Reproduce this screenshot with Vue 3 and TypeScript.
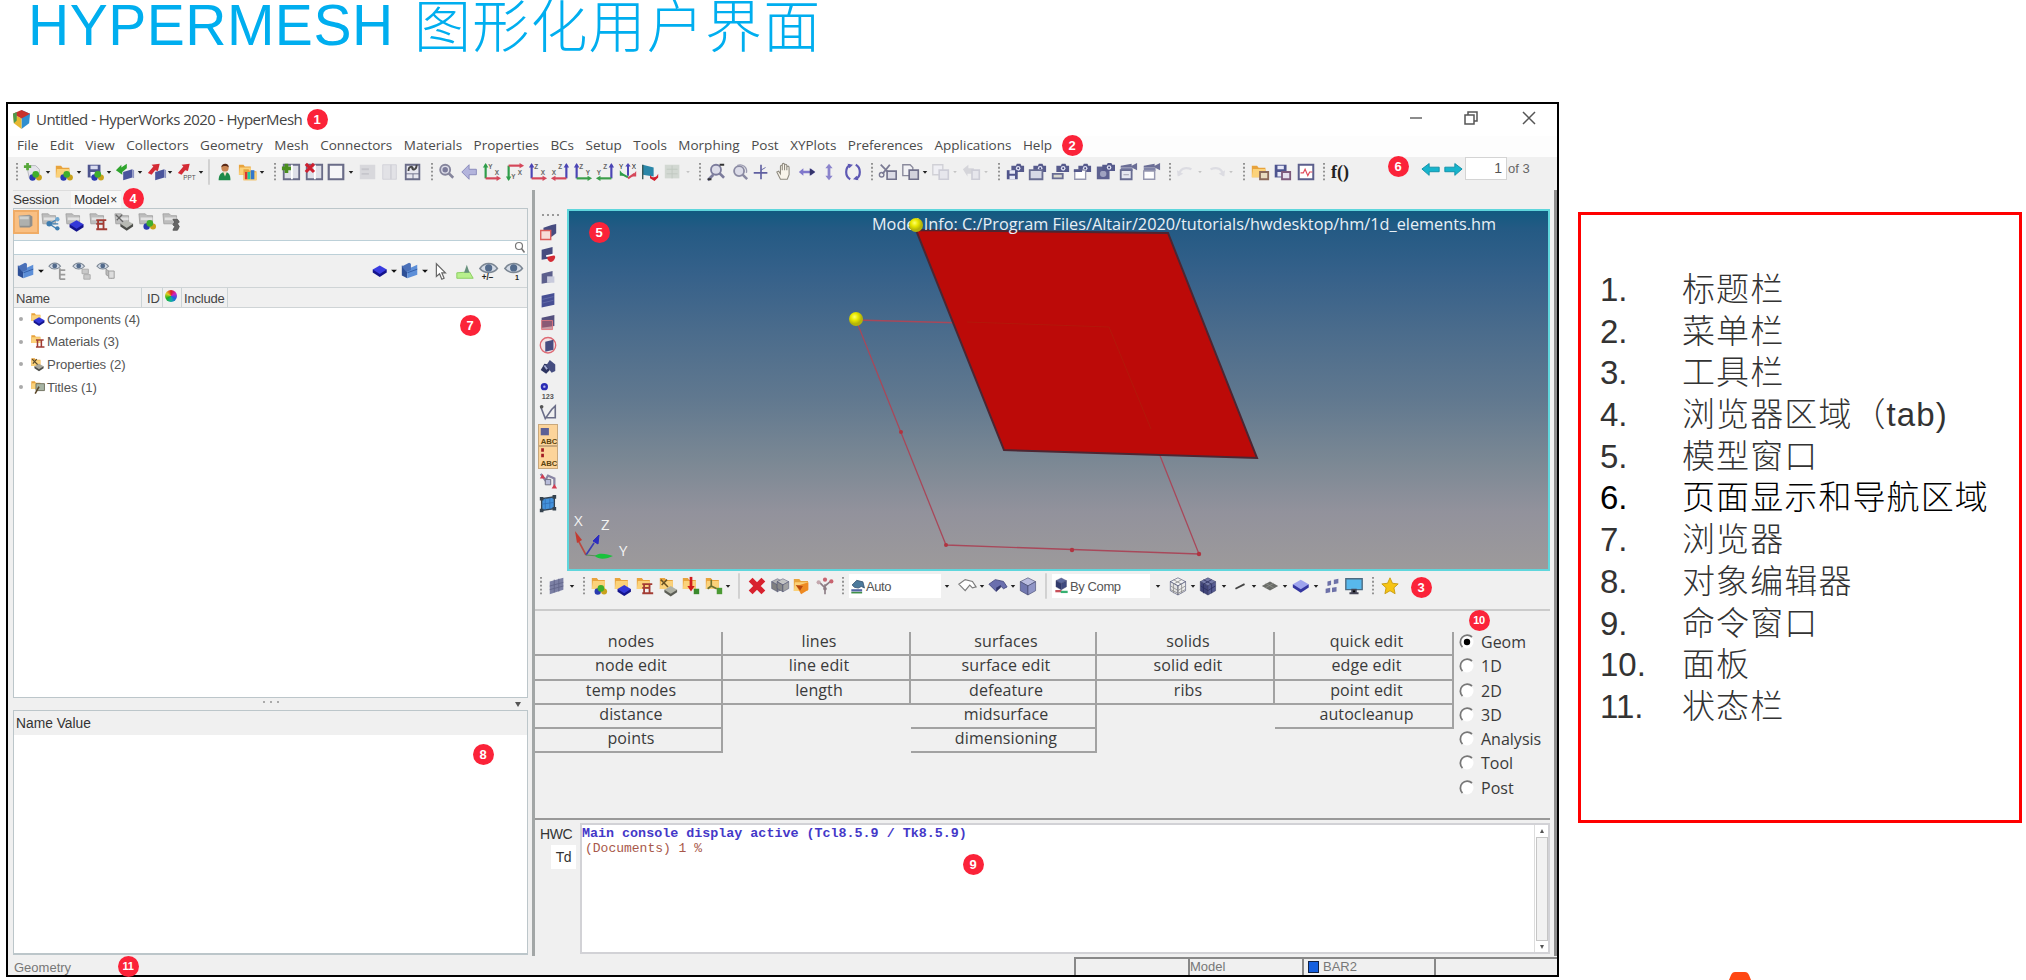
<script setup lang="ts">
type Item = [name: string, x: number]
interface Cell { name: string; w: number; gap: number }

const NARROW = ['dd', 'grip', 'sep', 'DD']

// Turns icon centres into widths and gaps so that the row can flow.
function row(start: number, items: Item[]): Cell[] {
  let end = start
  return items.map(([name, x]) => {
    const w = NARROW.includes(name) ? 8 : 22
    const gap = x - w / 2 - end
    end = x + w / 2
    return { name, w, gap }
  })
}

const folder = (x: number, y: number, s = 1) =>
  `<g transform="translate(${x} ${y}) scale(${s})"><path d="M0 1h5l1.500 2H13v9H0z" fill="#e8a33c"/><path d="M1 4h12v8H0z" fill="#fbd27a"/></g>`
const grayFolder =
  `<path d="M1 2h7l2 2h6v9H2z" fill="#bdbdbd" stroke="#999" stroke-width=".8"/><path d="M3 6h13v3H3z" fill="#e2e2e2"/>`
const slab = (x: number, y: number, top: string, side: string, s = 1) =>
  `<g transform="translate(${x} ${y}) scale(${s})"><path d="M0 4v3l7 4.500 7-4.500V4z" fill="${side}"/><path d="M7 0l7 4-7 4.500L0 4z" fill="${top}"/></g>`
const trio = (x: number, y: number) =>
  `<g transform="translate(${x} ${y})"><circle cx="3.500" cy="7" r="3.500" fill="#2a3bb0"/><circle cx="10.500" cy="7" r="3.300" fill="#c9a21c"/><circle cx="7" cy="3.500" r="3.700" fill="#3fae2c"/></g>`
const cube = (x: number, y: number, s: number, a: string, b: string, c: string) =>
  `<g transform="translate(${x} ${y}) scale(${s})" stroke="#3a3f66" stroke-width=".6"><path d="M9 0l8 4-8 4.500L1 4z" fill="${a}"/><path d="M1 4l8 4.500V18l-8-4.500z" fill="${b}"/><path d="M17 4L9 8.500V18l8-4.500z" fill="${c}"/></g>`
const blueBox = (x: number, y: number, o = 1) =>
  `<g transform="translate(${x} ${y})" opacity="${o}"><path d="M0 3l10-3v9L0 12z" fill="#4a559c"/><path d="M10 0l2 1v9l-2-1z" fill="#8d94c2"/></g>`
const page = (c: string) => `<path d="M3 3h15v16H3z" fill="#e6e6ee" stroke="${c}" stroke-width="2"/>`
const lens = (x: number, y: number, r: number, c: string) =>
  `<circle cx="${x}" cy="${y}" r="${r}" fill="#dcdce8" stroke="${c}" stroke-width="2"/><path d="M${x + r * 0.7} ${y + r * 0.7}l5 5" stroke="${c}" stroke-width="2.800"/>`
const cam = (x: number, y: number) =>
  `<g transform="translate(${x} ${y})"><path d="M-1 2h5l1-2h4l1 2h3v7H-1z" fill="#565a8c"/><circle cx="6.500" cy="5" r="2.500" fill="#e0e2f4"/><circle cx="6.500" cy="5" r="1.100" fill="#41457a"/></g>`
const clap =
  `<path d="M3 4l12-2v4H3zM15 4l6-3v8l-6-3z" fill="#6b6e96"/><path d="M3 6h13v4H3z" fill="#8084a8"/>`
const eye = (x: number, y: number, s = 1) =>
  `<g transform="translate(${x} ${y}) scale(${s})"><path d="M0 6C4 0 12 0 16 6 12 11 4 11 0 6z" fill="#d4dbe6" stroke="#7c8794" stroke-width="1.500"/><circle cx="8" cy="5.500" r="3.300" fill="#536b8c"/></g>`
const axis = (v: string, vx: number, h: string, hy: number, l1: string, l2: string) => {
  const up = hy > 10
  const right = vx < 10
  return (
    `<path d="M${vx} ${up ? 3 : 19}V${hy}" stroke="${v}" stroke-width="2.400"/>` +
    `<path d="M${vx - 3} ${up ? 6 : 16}h6l-3 ${up ? -5 : 5}z" fill="${v}"/>` +
    `<path d="M${vx} ${hy}H${right ? 18 : 4}" stroke="${h}" stroke-width="2.400"/>` +
    `<path d="M${right ? 16 : 6} ${hy - 3}v6l${right ? 5 : -5}-3z" fill="${h}"/>` +
    `<text x="${right ? 7 : 9}" y="${up ? 8 : 19}" font-size="7" font-weight="bold" font-family="Liberation Sans, sans-serif" fill="#666">${l1}</text>` +
    `<text x="${right ? 14 : 2}" y="14" font-size="7" font-weight="bold" font-family="Liberation Sans, sans-serif" fill="#666">${l2}</text>`
  )
}
const abc =
  `<text x="3" y="21" font-size="8.500" font-weight="bold" font-family="Liberation Sans, sans-serif" fill="#5c4410">ABC</text>`
const steel = `<path d="M8 9h11M8 13h9M10 9v10M16 9v10M8 19h12" stroke="#a33c34" stroke-width="2" fill="none"/>`

const icons: Record<string, string> = {
  dd: `<path d="M1.500 10h5l-2.500 3z" fill="#222"/>`,
  DD: `<path d="M.8 9.500h6.400L4 13z" fill="#111"/>`,
  grip: `<path d="M4 1v21" stroke="#8a8a8a" stroke-width="2" stroke-dasharray="2 2.300"/>`,
  sep: `<path d="M4-3v28" stroke="#c4c4c4" stroke-width="1.500"/>`,
  new: `<path d="M4 4h10l4 4v10H7z" fill="#e4e4ea" stroke="#b5b5bd"/><path d="M1 5h8M5 1v8" stroke="#57a83a" stroke-width="3"/>` + trio(7, 10),
  open: folder(2, 3, 1.15) + trio(7, 10),
  save: `<path d="M3 3h14v14H3z" fill="#4d548e"/><path d="M6 4h8v4H6z" fill="#d9dcf0"/><path d="M6 11h8v5H6z" fill="#eef"/>` + trio(7, 10),
  imp: blueBox(9, 8) + `<path d="M13 2L7 6V3L1 9l7 5v-3l5-4z" fill="#2fa52d"/>`,
  exp: blueBox(9, 8) + `<path d="M1 12l4 2 4-5 3 1 2-8-9 1 2 2z" fill="#d42b35"/>`,
  ppt: `<path d="M1 12l4 2 4-5 3 1 2-8-9 1 2 2z" fill="#d42b35"/><text x="7" y="20" font-size="7" font-family="Liberation Sans, sans-serif" fill="#555">PPT</text>`,
  user: `<path d="M4 20c0-6 3-9 7-9s6 3 6 9z" fill="#1f8a4a"/><circle cx="11" cy="6.500" r="4" fill="#c98552"/><path d="M7 6c0-6 9-5 8 0-2-2-6-2-8 0z" fill="#5a2a18"/><path d="M9 11l2 5 2-5z" fill="#f3dfc4"/>`,
  folders: folder(1, 2) + folder(6, 7, 1.1) + `<path d="M9 11v8" stroke="#d33" stroke-width="3"/><path d="M12 11v8" stroke="#2c9" stroke-width="3"/><path d="M16 9v10" stroke="#37c" stroke-width="4"/>`,
  addpage: `<path d="M3 3h17v16H3z" fill="#dfe0e8" stroke="#6a6c88" stroke-width="2"/><path d="M12 3v16" stroke="#fff" stroke-width="2"/><path d="M1 7h10M6 2v10" stroke="#4a8f1f" stroke-width="4"/>`,
  delpage: `<path d="M3 3h17v16H3z" fill="#dfe0e8" stroke="#6a6c88" stroke-width="2"/><path d="M12 3v16" stroke="#fff" stroke-width="2"/><path d="M2 2l9 9M11 2l-9 9" stroke="#cf2030" stroke-width="3.500"/>`,
  layout: `<path d="M3 3h16v16H3z" fill="#f6f6f8" stroke="#6a6c88" stroke-width="2.400"/>`,
  ghost1: `<path d="M2 3h17v16H2z" fill="#d8d8dc"/><path d="M4 8h8M4 13h8" stroke="#c6c6cc" stroke-width="2"/>`,
  ghost2: `<path d="M3 3h15v16H3z" fill="#e2e2e6" stroke="#d2d2d8"/><path d="M12 3v16" stroke="#d2d2d8" stroke-width="2"/>`,
  sync: page('#6a6c88') + `<path d="M11 13v6M3 13h15" stroke="#6a6c88"/><path d="M6 10c0-6 5-6 5-2M15 3c0 6-5 7-5 3" stroke="#444" stroke-width="2" fill="none"/>`,
  mag: lens(9, 8.5, 5.5, '#85859c') + `<circle cx="9" cy="8.500" r="3" fill="#7b7b9a"/>`,
  back: `<path d="M2 11l8-8v5h8v6h-8v5z" fill="#b3b4dc" stroke="#8687b8"/>`,
  xy: axis('#2f9e4a', 4, '#d5475a', 18, 'Y', 'X'),
  xyi: axis('#2f9e4a', 4, '#d5475a', 4, 'Y', 'X'),
  xz: axis('#4b45b5', 4, '#d5475a', 18, 'Z', 'X'),
  zx: axis('#4b45b5', 18, '#d5475a', 18, 'Z', 'X'),
  yz: axis('#4b45b5', 4, '#3a9e4a', 18, 'Z', 'Y'),
  zy: axis('#4b45b5', 18, '#3a9e4a', 18, 'Z', 'Y'),
  iso: `<path d="M11 15V4" stroke="#4b45b5" stroke-width="2.200"/><path d="M8 5h6l-3-4z" fill="#4b45b5"/><path d="M11 17L4 13" stroke="#2f9e4a" stroke-width="2.200"/><path d="M2 9v6h5z" fill="#2f9e4a"/><path d="M11 18l7-5" stroke="#d5475a" stroke-width="2.200"/><path d="M20 10v6h-5z" fill="#d5475a"/><text x="1" y="8" font-size="7" font-family="Liberation Sans, sans-serif">Y</text><text x="15" y="8" font-size="7" font-family="Liberation Sans, sans-serif">X</text>`,
  flag: `<path d="M3 3l12 3v10L3 14z" fill="#2a86a8"/><path d="M3 3v16" stroke="#355" stroke-width="1.500"/><path d="M11 14c2 4 7 4 9-1v4l-4 4-5-3z" fill="#d3202c"/>`,
  ghost3: `<path d="M2 3h16v15H2z" fill="#d2d8d2"/><path d="M4 8h12M4 13h12M10 4v14" stroke="#c0c8c0"/>`,
  fit: lens(11, 8.5, 5.5, '#7c7c9c') + `<path d="M2 20l6-6" stroke="#7c7c9c" stroke-width="3"/><path d="M15 3h5M2 19h4" stroke="#333" stroke-width="2"/>`,
  zoom: lens(10, 10, 5.5, '#8a8aa2') + `<path d="M8 4a7 7 0 0 1 10 8" stroke="#9a9ab0" stroke-width="1.500" fill="none"/>`,
  plus: `<path d="M3 12h15M11 3v16" stroke="#5f5fa0" stroke-width="1.800"/><path d="M11 9l5-3" stroke="#5f5fa0"/>`,
  hand: `<path d="M6 19L2 11l2-1 2 3V5c0-2 2-2 2 0v4-6c0-2 2.500-2 2.500 0v6-5c0-2 2.500-2 2.500 0v5-3c0-2 2.500-2 2.500 0v8l-2 5z" fill="#f8f4ea" stroke="#8f8b80" stroke-width="1.200"/>`,
  lr: `<path d="M2 11l5-4v2.500h8V7l5 4-5 4v-2.500H7V15z" fill="#8078cc"/><path d="M14 7l6 4-6 4z" fill="#34346a"/>`,
  ud: `<path d="M11 2l4 5h-2.500v8H15l-4 5-4-5h2.500V7H7z" fill="#8b84cc"/>`,
  rot: `<path d="M8 3C2 6 2 16 8 19M14 3c6 3 6 13 0 16" stroke="#5e59b4" stroke-width="2.400" fill="none"/><path d="M5 2l6 1-4 4zM17 20l-6-1 4-4z" fill="#5e59b4"/>`,
  cut: `<path d="M3 3l10 10M13 3L5 13" stroke="#7b7b94" stroke-width="2"/><circle cx="4" cy="14" r="2.500" fill="none" stroke="#7b7b94" stroke-width="1.500"/><path d="M10 10h10v9H10z" fill="#dcdce6" stroke="#73738c" stroke-width="1.800"/>`,
  copy: `<path d="M2 3h8l3 3v9H2z" fill="#f2f2f5" stroke="#8a8a9c" stroke-width="1.500"/><path d="M9 9h10v10H9z" fill="#d2d2dc" stroke="#70708a" stroke-width="1.800"/>`,
  gcopy: `<g opacity=".3"><path d="M2 3h11v11H2z" fill="#eef" stroke="#8a8a9c" stroke-width="1.500"/><path d="M9 9h10v10H9z" fill="#d2d2e4" stroke="#8080a0" stroke-width="1.800"/></g>`,
  gpaste: `<g opacity=".3"><path d="M1 8l6-5v4h6v6H6v3z" fill="#99a"/><path d="M11 9h8v10h-8z" fill="#d2d2e4" stroke="#8080a0" stroke-width="1.800"/></g>`,
  gdd: `<path d="M9 10h4l-2 2.500z" fill="#c4c4c4"/>`,
  cam1: cam(8, 2) + `<path d="M2 9h12v10H2z" fill="#50558c"/><path d="M5 9h6v4H5zM5 15h6v4H5z" fill="#e6e8f6"/>`,
  cam2: cam(8, 2) + `<path d="M3 9h14v10H3z" fill="#d6d8e6" stroke="#686c92" stroke-width="2"/>`,
  cam3: cam(8, 2) + `<path d="M3 13h11v5H3z" fill="#d9d9d0" stroke="#686c92" stroke-width="2"/>`,
  cam4: cam(8, 2) + `<path d="M3 9h12v10H3z" fill="#fff" stroke="#9698b0" stroke-width="1.500"/><path d="M2 8h9v3H2z" fill="#565a8c"/>`,
  cam5: `<path d="M2 5h14v14H2z" fill="#5d6190"/><circle cx="9" cy="13" r="3.500" fill="#9fa2c0"/>` + cam(9, 1),
  clap1: clap + `<path d="M3 9h12v10H3z" fill="#e6e8f2" stroke="#686c92" stroke-width="2"/><path d="M6 14h6" stroke="#99a"/>`,
  clap2: clap + `<path d="M3 10h12v9H3z" fill="#fff" stroke="#9698b0" stroke-width="1.600"/>`,
  undo: `<path d="M3 15C4 7 10 5 17 8" stroke="#dcdce2" stroke-width="2.500" fill="none"/><path d="M1 9l1 7 6-3z" fill="#dcdce2"/>`,
  redo: `<path d="M19 15C18 7 12 5 5 8" stroke="#dcdce2" stroke-width="2.500" fill="none"/><path d="M21 9l-1 7-6-3z" fill="#dcdce2"/>`,
  tfold: folder(2, 3, 1.15) + `<path d="M11 11h9v8h-9z" fill="#e9dcc0" stroke="#8a6a5a" stroke-width="2"/>`,
  tsave: `<path d="M3 3h13v14H3z" fill="#4d548e"/><path d="M6 4h7v4H6zM6 11h6v5H6z" fill="#e6e8f8"/><path d="M11 11h9v8h-9z" fill="#e6e0ee" stroke="#7d5a7c" stroke-width="2"/>`,
  plot: `<path d="M3 3h16v16H3z" fill="#fff" stroke="#5c5f8c" stroke-width="2.200"/><path d="M5 12h3l2-4 3 7 2-4h3" stroke="#e0495a" stroke-width="1.300" fill="none"/>`,
  left: `<path d="M1 11l8-6v4h11v5H9v4z" fill="#17b4cc" stroke="#0d8ea6"/>`,
  right: `<path d="M21 11l-8-6v4H2v5h11v4z" fill="#17b4cc" stroke="#0d8ea6"/>`,
  // Browser
  b1: `<path d="M3 4l12-1 3 2v10l-3 2H4z" fill="#8e8e8c"/><path d="M3 4h12v11H4z" fill="#aeb0ae"/><path d="M4 5h10v3H4z" fill="#d0d2d0"/>`,
  b2: grayFolder + `<path d="M18 8L9 13l9 6M9 13h10" stroke="#4583b4" stroke-width="1.500" fill="none"/><circle cx="9" cy="13" r="3" fill="#3d7cb0"/><circle cx="18" cy="8" r="2.400" fill="#6fa8d2"/><circle cx="18" cy="18" r="2.400" fill="#3d7cb0"/>`,
  b3: grayFolder + slab(5, 9, '#3338d8', '#14148c', 1.1),
  b4: grayFolder + steel,
  b5: grayFolder + `<path d="M2 3l8 8M3 9l6-6" stroke="#666" stroke-width="1.500"/>` + slab(7, 9, '#b8bab4', '#4c4e4a', 1),
  b6: grayFolder + trio(6, 9),
  b7: grayFolder + `<path d="M12 8h5l2 3-2 2 2 3-2 4h-5l2-4-2-2 2-3z" fill="#666" stroke="#555"/>`,
  blue: `<path d="M2 5l6 2v12l-6-3z" fill="#2d4f96"/><path d="M8 9l11-5v11L8 19z" fill="#5d8fd8"/><path d="M2 6l8-4 2 1v7l-5 2z" fill="#4a70b8"/><path d="M8 13l11-4" stroke="#2f5aa6"/>`,
  e1: eye(1, 1, 0.8) + `<path d="M13 8v12M13 10h6M13 15h6M13 20h6" stroke="#9a9a9a" stroke-width="2" fill="none"/>`,
  e2: eye(1, 1, 0.8) + `<path d="M11 9h7v5h-7zM13 15h7v5h-7z" fill="#c9c9c9" stroke="#aaa"/>`,
  e3: eye(1, 1, 0.8) + `<path d="M11 9l6 4v6l-6-4z" fill="#bbb" stroke="#999"/><path d="M14 11h6v8h-6z" fill="#ddd" stroke="#999"/>`,
  slab: slab(3, 5, '#3a3ce0', '#14148c', 1.1),
  cursor: `<path d="M7 3v14l3.500-3 2.500 6 2.500-1-2.500-6H17z" fill="#fff" stroke="#666" stroke-width="1.300"/>`,
  green: `<path d="M2 13l14-1 4 7H2z" fill="#b8f08c" stroke="#86cc5c"/><path d="M13 4l3 9h-6z" fill="#67917c"/>`,
  eyepm: eye(1, 1, 1.2) + `<text x="3" y="21" font-size="9" font-weight="bold" font-family="Liberation Sans, sans-serif" fill="#222">+/−</text>`,
  eye1: eye(1, 1, 1.2) + `<text x="12" y="21" font-size="8" font-weight="bold" font-family="Liberation Sans, sans-serif" fill="#222">1</text>`,
  tcomp: folder(3, 2, 0.9) + slab(6, 8, '#3338d8', '#14148c', 1),
  tmat: folder(3, 2, 0.9) + `<path d="M9 9h10M11 9v10M16 9v10M9 18h11" stroke="#a03c34" stroke-width="2"/>`,
  tprop: folder(3, 2, 0.9) + `<path d="M4 4l8 8M5 10l5-6" stroke="#5a4a2a" stroke-width="1.500"/>` + slab(7, 10, '#a9a79a', '#4c4e4a', 0.85),
  ttitle: folder(3, 2, 0.9) + `<path d="M9 6h11v9H9z" fill="#a7b4a4" stroke="#5e5e4a"/><path d="M8 19l5-9" stroke="#5a4628" stroke-width="2"/>`,
  // View tools
  v1: `<path d="M6 6l9-3 5-1v10l-5 4H6z" fill="#474c80"/><path d="M3 9h11v10H3z" fill="#f6dcd8" stroke="#dc5a58" stroke-width="1.500"/>`,
  v2: `<path d="M4 5l12-3v12L4 16z" fill="#474c80"/><path d="M10 14c2-4 8-5 9-1-1 6-7 8-9 1z" fill="#d42a34"/><path d="M9 12l9-2" stroke="#fff" stroke-width="2"/>`,
  v3: `<path d="M4 7l12-3v12L4 18z" fill="#5c5f8c"/><path d="M10 10h8v7h-8z" fill="#c8cadc"/>`,
  v4: `<path d="M4 6l14-3v13L4 19z" fill="#474f94"/><path d="M5 10l12-3M5 14l12-3" stroke="#6a72ae" stroke-width=".8"/>`,
  v5: `<path d="M4 6l14-3v12L4 17z" fill="#54507e"/><path d="M4 9h12v10H4z" fill="#b06070" fill-opacity=".6" stroke="#e07880"/>`,
  v6: `<circle cx="11" cy="11" r="8.500" fill="#f4e4e6" stroke="#de6a74" stroke-width="1.500"/><path d="M8 7l9-2v11l-9 2z" fill="#474c80"/>`,
  v7: `<path d="M3 14l4-7 5 1 1 6-4 4z" fill="#2e3560"/><path d="M9 9l4-6 6 5v7l-4 2z" fill="#454d80"/><path d="M7 9l3 4" stroke="#a8b0d8" stroke-width="2"/>`,
  v8: `<circle cx="7" cy="7" r="4" fill="#2a2cb4"/><circle cx="7" cy="7" r="1.300" fill="#b8baf0"/><text x="4" y="21" font-size="8" font-weight="bold" font-family="Liberation Sans, sans-serif" fill="#555">123</text>`,
  v9: `<path d="M3 5l5 13 7-10 4-4v13H8" stroke="#6b6e88" stroke-width="1.800" fill="none"/><circle cx="4" cy="5" r="2" fill="#555"/>`,
  v10: `<path d="M3 3h9v8H3z" fill="#5b5f96"/>` + abc,
  v11: `<path d="M5 1v4M5 7v4" stroke="#a31c24" stroke-width="3"/>` + abc,
  v12: `<path d="M3 4l5 7 3-5 7 3v8" stroke="#8a86a4" stroke-width="2.500" fill="none"/><path d="M2 9l3-5 3 5zM15 20l3-5 3 5z" fill="#d23c50"/><path d="M8 10h6v6H8z" fill="#b8bcda" stroke="#667"/>`,
  v13: `<path d="M4 6l14-2v13L4 19z" fill="#4492dc" stroke="#35424e" stroke-width="1.500"/><path d="M8 5v13M13 5v13M4 12l14-2" stroke="#2f6cb2" stroke-width=".8"/><path d="M2 4h4v4H2zM16 2h4v4h-4zM2 17h4v4H2zM16 15h4v4h-4z" fill="#35424e"/>`,
  // Lower toolbar
  m0: `<path d="M3 6l15-4v13L3 20z" fill="#7c80a4"/><path d="M3 11l15-4M3 15l15-4M8 4v14M13 3v14" stroke="#62668a" stroke-width="1"/>`,
  m1: folder(2, 1, 1.1) + trio(5, 10),
  m2: folder(2, 1, 1.1) + slab(5, 10, '#3338d8', '#14148c', 1.05),
  m3: folder(2, 1, 1.1) + steel,
  m4: folder(2, 1, 1.1) + `<path d="M3 4l8 8M4 10l6-6" stroke="#6a5222" stroke-width="1.600"/>` + slab(7, 11, '#b0b2a6', '#5c5e56', 1),
  m5: folder(2, 1, 1.1) + `<path d="M11 1v13" stroke="#d01c1c" stroke-width="3"/><path d="M7 11h8l-4 6z" fill="#d01c1c"/><path d="M14 14h6v6h-6z" fill="#3b8a2c"/>`,
  m6: folder(2, 1, 1.1) + `<path d="M8 4v7l-4 3M8 11l6 3" stroke="#6d7030" stroke-width="1.800" fill="none"/><path d="M14 13h6v7h-6z" fill="#4b9a34"/>`,
  del: `<path d="M4 4l14 14M18 4L4 18" stroke="#d8222e" stroke-width="6"/>`,
  org: cube(1, 3, 0.8, '#b4b4b4', '#808080', '#969696') + cube(7, 3, 0.8, '#c4c4c4', '#8a8a8a', '#a2a2a2'),
  card: folder(2, 2, 1.2) + `<path d="M5 11l13-4v8l-8 5z" fill="#ee8a22"/><path d="M4 10l8 1-3 5z" fill="#b8460e"/>`,
  tree: `<path d="M11 20V9M11 13L5 7M11 11l6-5" stroke="#8c7c84" stroke-width="1.800"/><circle cx="11" cy="4" r="2.300" fill="#c86470"/><circle cx="4" cy="7" r="2.300" fill="#c4a8ae"/><circle cx="18" cy="6" r="2.300" fill="#c86470"/><circle cx="11" cy="14" r="2" fill="#8c7c84"/>`,
  auto: `<path d="M4 9l6-6 8 2 2 8-4-2-4 2-5-1z" fill="#4d7a9c" stroke="#35506c"/><path d="M3 16h14" stroke="#5568a4" stroke-width="3"/><path d="M3 19h14" stroke="#3f9048" stroke-width="2"/>`,
  wire: `<path d="M2 9l7-5 8 2 4 6-4 1-3-3-5 6z" fill="#fff" stroke="#7c7c7c" stroke-width="1.300"/>`,
  shade: `<path d="M1 9l7-5 9 2 4 6-4 2-3-3-5 6z" fill="#6a6fae" stroke="#454a80"/><path d="M9 17v-4l5-3v3z" fill="#31356a"/>`,
  cubeA: cube(1.5, 2, 1.05, '#babde0', '#7278b0', '#9095c6'),
  bycomp: cube(3, 0, 0.85, '#5e6aa0', '#303a6c', '#404a80') + `<path d="M3 17h8" stroke="#c8505a" stroke-width="3"/><path d="M10 18h9" stroke="#35b070" stroke-width="3"/>`,
  mesh: cube(1.5, 2, 1.05, '#f2f2f2', '#e2e2e2', '#ececec') + `<path d="M6 4l9 5v10M15 4L6 9v10M3 11l8 5 8-5M3 15l8 4 8-4M11 11v9" stroke="#8d8d8d" stroke-width=".9" fill="none"/>`,
  meshb: cube(1.5, 2, 1.05, '#7479a8', '#41457a', '#555a90') + `<path d="M6 4l9 5v10M15 4L6 9v10M3 11l8 5 8-5" stroke="#2c3060" stroke-width=".9" fill="none"/>`,
  line: `<path d="M6 14l10-5" stroke="#444" stroke-width="2"/>`,
  flat: `<path d="M11 6l9 5-9 5-9-5z" fill="#6a6c68"/><path d="M6 8l9 5M15 8l-9 5" stroke="#94968e" stroke-width=".8"/>`,
  slabl: slab(2, 4, '#9ea4ee', '#3436a0', 1.25),
  quads: `<path d="M6 6l4-1v5l-4 1zM13 4l5-1v5l-5 1zM4 14l5-1v5l-5 1zM11 13l5-1v5l-5 1z" fill="#6d71a8"/>`,
  screen: `<path d="M2 3h18v12H2z" fill="#58b8ec" stroke="#4c6a80" stroke-width="1.500"/><path d="M9 15h4v4H9zM6 19h10" stroke="#445" stroke-width="2"/>`,
  star: `<path d="M11 2l2.700 6 6.300.7-4.700 4.300 1.300 6.500-5.600-3.300-5.600 3.300 1.300-6.500L2 8.700 8.300 8z" fill="#f6c414" stroke="#c89a10"/>`
}

const menus = ['File', 'Edit', 'View', 'Collectors', 'Geometry', 'Mesh', 'Connectors', 'Materials', 'Properties', 'BCs', 'Setup', 'Tools', 'Morphing', 'Post', 'XYPlots', 'Preferences', 'Applications', 'Help']

const mainTools = row(8, [
  ['grip', 17], ['new', 33], ['dd', 48], ['open', 64], ['dd', 79], ['save', 95], ['dd', 109], ['imp', 125], ['dd', 140], ['exp', 157], ['dd', 170], ['ppt', 187], ['dd', 201], ['sep', 209],
  ['user', 225], ['folders', 248], ['dd', 262], ['grip', 275], ['addpage', 291], ['delpage', 314], ['layout', 336], ['dd', 351], ['ghost1', 368], ['ghost2', 390], ['sync', 413], ['grip', 432],
  ['mag', 447], ['back', 470], ['xy', 492], ['xyi', 515], ['xz', 538], ['zx', 560], ['yz', 583], ['zy', 605], ['iso', 628], ['flag', 650], ['ghost3', 673], ['gdd', 688], ['grip', 700],
  ['fit', 716], ['zoom', 740], ['plus', 761], ['hand', 785], ['lr', 807], ['ud', 829], ['rot', 853], ['grip', 872], ['cut', 888], ['copy', 911], ['dd', 925], ['gcopy', 941], ['gdd', 955], ['gpaste', 972], ['gdd', 986], ['grip', 999],
  ['cam1', 1015], ['cam2', 1037], ['cam3', 1060], ['cam4', 1082], ['cam5', 1105], ['clap1', 1128], ['clap2', 1151], ['grip', 1170], ['undo', 1186], ['gdd', 1200], ['redo', 1216], ['gdd', 1231], ['grip', 1244], ['tfold', 1260], ['tsave', 1282], ['plot', 1306], ['grip', 1324]
])
const navTools = row(1365, [['left', 1431], ['right', 1453]])
const browserTools = row(14, [['b1', 26], ['b2', 51], ['b3', 75], ['b4', 99], ['b5', 124], ['b6', 148], ['b7', 172]])
const filterTools = row(14, [['blue', 26], ['DD', 41], ['e1', 58], ['e2', 82], ['e3', 106], ['slab', 380], ['DD', 394], ['blue', 410], ['DD', 425], ['cursor', 440], ['green', 465], ['eyepm', 489], ['eye1', 514]])
const viewTools = Array.from({ length: 13 }, (_, i) => `v${i + 1}`)
const low1 = row(535, [['grip', 541], ['m0', 557], ['dd', 572], ['grip', 584], ['m1', 600], ['m2', 623], ['m3', 645], ['m4', 668], ['m5', 691], ['m6', 714], ['dd', 728], ['sep', 739], ['del', 757], ['org', 780], ['card', 802], ['tree', 825], ['grip', 843]])
const low2 = row(941, [['dd', 947], ['wire', 967], ['dd', 982], ['shade', 998], ['dd', 1013], ['cubeA', 1028], ['sep', 1046]])
const low3 = row(1150, [['dd', 1158], ['mesh', 1178], ['dd', 1193], ['meshb', 1208], ['dd', 1224], ['line', 1240], ['dd', 1254], ['flat', 1270], ['dd', 1285], ['slabl', 1301], ['dd', 1316], ['quads', 1332], ['screen', 1354], ['grip', 1373], ['star', 1390]])

const tree = [
  { icon: 'tcomp', label: 'Components (4)' },
  { icon: 'tmat', label: 'Materials (3)' },
  { icon: 'tprop', label: 'Properties (2)' },
  { icon: 'ttitle', label: 'Titles (1)' }
]
const panel = [
  ['nodes', 'node edit', 'temp nodes', 'distance', 'points'],
  ['lines', 'line edit', 'length'],
  ['surfaces', 'surface edit', 'defeature', 'midsurface', 'dimensioning'],
  ['solids', 'solid edit', 'ribs'],
  ['quick edit', 'edge edit', 'point edit', 'autocleanup']
]
const pages = ['Geom', '1D', '2D', '3D', 'Analysis', 'Tool', 'Post']
const badges: [number, number, number][] = [
  [1, 317, 119], [2, 1072, 145], [3, 1421, 587], [4, 133, 198], [5, 599, 232], [6, 1398, 166],
  [7, 470, 325], [8, 483, 754], [9, 973, 864], [10, 1479, 620], [11, 128, 966]
]
const legend = ['标题栏', '菜单栏', '工具栏', '浏览器区域（tab)', '模型窗口', '页面显示和导航区域', '浏览器', '对象编辑器', '命令窗口', '面板', '状态栏']
</script>

<template>
  <div class="slide">
    <h1><span class="latin">HYPERMESH</span><span class="han">图形化用户界面</span></h1>
    <div class="content">
      <section class="window">
        <header class="titlebar">
          <svg class="logo" viewBox="0 0 20 20">
            <path d="M10 0l9 4-1 10-8 6z" fill="#2f8fd0" /><path d="M1 4l9 5v11L2 14z" fill="#e8b832" />
            <path d="M10 0l9 4-9 5-9-5z" fill="#c8332c" /><path d="M1 4l4-2v9L2 14z" fill="#4d9a4c" />
          </svg>
          <span class="caption">Untitled - HyperWorks 2020 - HyperMesh</span>
          <svg class="controls" viewBox="0 0 140 20">
            <path d="M7 9h12" stroke="#666" stroke-width="1.500" />
            <path d="M62 6h9v9h-9zM65 6V3h9v9h-3" fill="none" stroke="#555" stroke-width="1.500" />
            <path d="M120 3l12 12M132 3l-12 12" stroke="#555" stroke-width="1.500" />
          </svg>
        </header>
        <nav class="menubar"><span v-for="m in menus" :key="m">{{ m }}</span></nav>
        <div class="toolbar">
          <svg v-for="(c, i) in mainTools" :key="i" :viewBox="`0 0 ${c.w} 22`" :style="{ width: c.w + 'px', marginLeft: c.gap + 'px' }" v-html="icons[c.name]" />
          <b class="fn">f()</b>
          <svg v-for="(c, i) in navTools" :key="'n' + i" class="nav" :viewBox="`0 0 ${c.w} 22`" :style="{ width: c.w + 'px', marginLeft: c.gap + 'px' }" v-html="icons[c.name]" />
          <span class="pageno">1</span><span class="of">of 3</span>
        </div>

        <div class="body">
          <aside class="browser">
            <div class="tabs"><span class="tab">Session</span><span class="tab on">Model<i>×</i></span></div>
            <div class="box top">
              <div class="icons first">
                <svg v-for="(c, i) in browserTools" :key="i" :class="{ active: i === 0 }" :viewBox="`0 0 ${c.w} 22`" :style="{ width: c.w + 'px', marginLeft: c.gap + 'px' }" v-html="icons[c.name]" />
              </div>
              <div class="search">
                <svg viewBox="0 0 12 12"><circle cx="5" cy="5" r="3.500" fill="none" stroke="#777" stroke-width="1.200" /><path d="M7.500 7.500l3 4" stroke="#777" stroke-width="1.500" /></svg>
              </div>
              <div class="icons second">
                <svg v-for="(c, i) in filterTools" :key="i" :viewBox="`0 0 ${c.w} 22`" :style="{ width: c.w + 'px', marginLeft: c.gap + 'px' }" v-html="icons[c.name]" />
              </div>
              <div class="thead">
                <span class="c1">Name</span><span class="c2">ID</span><span class="c3"><i class="wheel"></i></span><span class="c4">Include</span>
              </div>
              <ul class="tree">
                <li v-for="t in tree" :key="t.label"><i class="knob"></i><svg viewBox="0 0 22 22" v-html="icons[t.icon]" />{{ t.label }}</li>
              </ul>
            </div>
            <div class="split"><i class="dots"></i><i class="tri"></i></div>
            <div class="box bottom"><div class="nv">Name Value</div></div>
          </aside>
          <div class="divider"></div>

          <main class="work">
            <div class="viewrow">
              <div class="vtools">
                <i class="vgrip"></i>
                <svg v-for="(n, i) in viewTools" :key="n" :class="{ hot: i === 9 || i === 10 }" viewBox="0 0 22 22" v-html="icons[n]" />
              </div>
              <div class="viewport">
                <svg class="scene" viewBox="570 212 979 358">
                  <defs><radialGradient id="ball" cx=".4" cy=".35"><stop offset="0" stop-color="#ffff6a" /><stop offset=".5" stop-color="#e8e800" /><stop offset="1" stop-color="#b4b40a" /></radialGradient></defs>
                  <path d="M857 321L1110 328 1200 555 947 546z" fill="none" stroke="#a8485a" stroke-width="1.300" />
                  <path d="M917 231L1169 234 1258 459 1005 451z" fill="#bc0a08" stroke="#4c2632" stroke-width="2" />
                  <path d="M968 323L1110 328 1152 430" fill="none" stroke="#b3180a" stroke-width="1" />
                  <g fill="#b03440"><circle cx="902" cy="433" r="2" /><circle cx="947" cy="546" r="2" /><circle cx="1073" cy="551" r="2.200" /><circle cx="1200" cy="555" r="2.200" /></g>
                  <circle cx="857" cy="320" r="7" fill="url(#ball)" />
                  <path d="M587 556l-8-15" stroke="#b84a42" stroke-width="1.600" /><path d="M576 532l7 9-5 3z" fill="#c43a30" />
                  <path d="M587 556l8-12" stroke="#3c3cb0" stroke-width="1.600" /><path d="M600 536l-1 9-5-3z" fill="#2c2cc0" stroke="#2c2cc0" />
                  <path d="M587 556l12 1" stroke="#5a8a5a" stroke-width="1.200" /><path d="M596 557c4-4 12-2 18 0-6 3-14 4-18 0z" fill="#19c23c" />
                  <g font-family="Open Sans, sans-serif" font-size="15" fill="#f2f2f2"><text x="575" y="527">X</text><text x="602" y="531">Z</text><text x="620" y="557">Y</text></g>
                  <text class="info" x="873" y="230.500" textLength="624" lengthAdjust="spacingAndGlyphs">Model Info: C:/Program Files/Altair/2020/tutorials/hwdesktop/hm/1d_elements.hm</text>
                  <circle cx="917" cy="226" r="7" fill="url(#ball)" />
                </svg>
              </div>
            </div>

            <div class="lower">
              <svg v-for="(c, i) in low1" :key="'a' + i" :viewBox="`0 0 ${c.w} 22`" :style="{ width: c.w + 'px', marginLeft: c.gap + 'px' }" v-html="icons[c.name]" />
              <div class="combo auto"><svg viewBox="0 0 22 22" v-html="icons.auto" />Auto</div>
              <svg v-for="(c, i) in low2" :key="'b' + i" :viewBox="`0 0 ${c.w} 22`" :style="{ width: c.w + 'px', marginLeft: c.gap + 'px' }" v-html="icons[c.name]" />
              <div class="combo comp"><svg viewBox="0 0 22 22" v-html="icons.bycomp" />By Comp</div>
              <svg v-for="(c, i) in low3" :key="'c' + i" :viewBox="`0 0 ${c.w} 22`" :style="{ width: c.w + 'px', marginLeft: c.gap + 'px' }" v-html="icons[c.name]" />
            </div>

            <div class="panel">
              <div v-for="(col, i) in panel" :key="i" class="col"><div v-for="p in col" :key="p" class="cell">{{ p }}</div></div>
              <div class="radios">
                <label v-for="(p, i) in pages" :key="p">
                  <svg viewBox="0 0 16 16"><circle cx="8" cy="8" r="6.500" fill="#fff" /><path d="M3.500 13A6.800 6.800 0 0 1 13 3" fill="none" stroke="#777" stroke-width="1.800" /><circle v-if="i === 0" cx="8" cy="8" r="3.200" fill="#000" /></svg>{{ p }}
                </label>
              </div>
            </div>

            <div class="console">
              <div class="ctabs"><span>HWC</span><span class="tcl">Td</span></div>
              <div class="term">
                <pre><b>Main console display active (Tcl8.5.9 / Tk8.5.9)</b>
<em>(Documents) 1 %</em></pre>
                <div class="scroll"><i class="up"></i><i class="thumb"></i><i class="down"></i></div>
              </div>
            </div>
          </main>
          <div class="edge"></div>
        </div>

        <footer class="status">
          <span class="mode">Geometry</span>
          <span class="slot s1"></span><span class="slot s2">Model</span><span class="slot s3"><i></i>BAR2</span><span class="slot s4"></span>
        </footer>
      </section>

      <ol class="legend">
        <li v-for="(t, i) in legend" :key="i" :class="{ dark: i === 5 }"><span class="num">{{ i + 1 }}.</span><span>{{ t }}</span></li>
      </ol>
    </div>

    <span v-for="[n, x, y] in badges" :key="n" class="badge" :class="{ two: n > 9 }" :style="{ left: x - 10.5 + 'px', top: y - 10.5 + 'px' }">{{ n }}</span>
    <svg class="brand" viewBox="0 0 26 8"><path d="M4 3c1-2 2-3 4-3h10c2 0 3 1 4 3l2 5H2z" fill="#ff4713" /></svg>
  </div>
</template>

<style>
body { margin: 0; background: #fff; overflow: hidden; }
</style>

<style scoped>
.slide { position: relative; width: 2026px; height: 980px; overflow: hidden; background: #fff; font-family: "Liberation Sans", "Noto Sans CJK SC", sans-serif; }
.slide * { box-sizing: border-box; }
h1 { margin: 0; height: 102px; padding-left: 27px; display: flex; color: #00aeef; font-weight: 300; font-size: 57px; line-height: 51px; white-space: nowrap; }
.latin { width: 387px; padding-left: 1px; letter-spacing: .5px; }
.han { font-family: "Noto Sans CJK SC", sans-serif; font-weight: 300; line-height: 44px; letter-spacing: 1.200px; }
.content { display: flex; align-items: flex-start; }
.window { margin-left: 6px; width: 1553px; height: 875px; border: 2px solid #000; background: #f0f0f0; overflow: hidden; display: flex; flex-direction: column; flex: none; }
.titlebar { height: 32px; flex: none; background: #fff; display: flex; align-items: center; padding: 0 0 2px 4px; }
.logo { width: 19px; height: 19px; }
.caption { margin-left: 5px; font: 15px "Open Sans", sans-serif; letter-spacing: -.53px; color: #444; white-space: nowrap; }
.controls { width: 140px; height: 20px; margin-left: auto; margin-right: 14px; }
.menubar { height: 21px; flex: none; background: #fdfdfd; display: flex; gap: 11.470px; padding-left: 9px; font: 13.500px/19px "Open Sans", sans-serif; color: #4a4a4a; white-space: nowrap; }
.toolbar { height: 33px; flex: none; display: flex; align-items: center; padding-bottom: 3px; }
.toolbar svg, .icons svg, .lower svg { height: 20px; flex: none; overflow: visible; }
.fn { margin-left: 3px; width: 34px; font: bold 18px "Liberation Serif", serif; color: #222; }
.toolbar .nav { margin-top: -6px; }
.pageno { margin: -7px 0 0 1px; width: 42px; height: 23px; border: 1px solid #d4d4d4; background: #fff; text-align: right; padding-right: 4px; font: 14px/21px "Liberation Sans", sans-serif; color: #555; }
.of { margin: -7px 0 0 1px; font-size: 13px; color: #666; }
.body { flex: 1; min-height: 0; display: flex; }
.browser { width: 519px; margin-left: 5px; display: flex; flex-direction: column; flex: none; }
.tabs { height: 18px; display: flex; font-size: 13.500px; line-height: 18px; color: #333; }
.tab { padding-left: 0; width: 58px; border-top: 1px solid #ddd; letter-spacing: -.3px; }
.tab.on { background: #f8f8f8; width: 50px; padding-left: 3px; }
.tab i { font-style: normal; margin-left: 1px; font-size: 12px; }
.box { width: 515px; border: 1px solid #bcc6ca; display: flex; flex-direction: column; }
.box.top { height: 490px; }
.icons { display: flex; align-items: center; }
.first { height: 31px; padding-bottom: 5px; }
.active { background: #f9bf82; outline: 2px solid #f0ac66; }
.search { height: 15px; background: #fff; border: 1px solid #bcd0d8; border-width: 1px 0; display: flex; justify-content: flex-end; }
.search svg { width: 12px; height: 12px; margin-right: 1px; }
.second { height: 32px; }
.thead { height: 21px; display: flex; border: 1px solid #cfd4d6; border-width: 1px 0; font-size: 13px; line-height: 21px; color: #444; }
.thead span { border-right: 1px solid #ccd4d6; padding-left: 2px; letter-spacing: -.2px; }
.c1 { width: 128px; } .thead .c2 { padding-left: 5px; width: 21px; } .c3 { width: 19px; } .c4 { width: 46px; }
.wheel { display: block; width: 12px; height: 12px; margin-top: 2px; border-radius: 50%; background: conic-gradient(#e02020, #d020c0, #2060e0, #10b0a0, #20b020, #e0d020, #e02020); }
.tree { list-style: none; margin: 0; padding: 0 0 0 5px; flex: 1; background: #fff; font-size: 13.200px; color: #555; }
.tree li { height: 22.600px; display: flex; align-items: center; letter-spacing: -.1px; }
.tree svg { width: 17px; height: 17px; margin: 0 1px 0 6px; }
.knob { width: 4px; height: 4px; background: #aaa; border-radius: 50%; }
.split { height: 12px; display: flex; align-items: center; padding-left: 250px; }
.dots { width: 18px; height: 2px; margin-top: -5px; background: repeating-linear-gradient(90deg, #aaa 0 2px, transparent 2px 7px); }
.tri { margin-left: 234px; border: 3px solid transparent; border-top: 5px solid #555; border-bottom: 0; }
.box.bottom { height: 245px; background: #fff; border-bottom-width: 2px; }
.nv { height: 24px; background: #f0f0f0; font-size: 13.800px; line-height: 26px; padding-left: 2px; color: #333; }
.divider { width: 3px; height: 766px; background: #a2a6a6; }
.work { width: 1019px; flex: none; display: flex; flex-direction: column; }
.edge { width: 3px; background: #8e8e8e; }
.viewrow { height: 381px; display: flex; flex: none; }
.vtools { width: 33px; padding-top: 24px; display: flex; flex-direction: column; }
.vtools svg { width: 20px; height: 22.550px; margin-left: 3px; flex: none; }
.vgrip { width: 18px; height: 2px; margin: 0 0 5px 7px; background: repeating-linear-gradient(90deg, #999 0 2px, transparent 2px 5px); }
.hot { background: #fcd49a; outline: 1px solid #c9a87c; outline-offset: -1px; }
.viewport { margin-top: 19px; margin-left: -1px; width: 983px; height: 362px; border: 2px solid #5fd6dc; background: linear-gradient(#125a80 0, #245a84 5%, #36618a 18%, #4b6c8c 34%, #60788f 52%, #7b8894 70%, #92929c 84%, #9d9a9b 100%); }
.scene { display: block; width: 979px; height: 358px; }
.info { font: 16px "Open Sans", sans-serif; fill: #e8f0f6; }
.lower { height: 40px; flex: none; padding-bottom: 8px; border-bottom: 2px solid #cbcbcb; margin-right: 4px; display: flex; align-items: center; }
.combo { height: 24px; background: #fff; display: flex; align-items: center; font-size: 13px; color: #555; letter-spacing: -.4px; }
.combo svg { width: 17px; height: 19px; }
.auto { width: 92px; margin-left: 2px; }
.comp { width: 98px; margin-left: 2px; padding-left: 1px; }
.panel { height: 209px; flex: none; padding-top: 21px; display: grid; grid-template-columns: 188px 188px 186px 178px 179px 1fr; align-items: start; font: 16px "Open Sans", sans-serif; color: #3a3a3a; border-bottom: 2px solid #999; margin-right: 4px; }
.cell { height: 24.250px; border-right: 2px solid #a2a2a2; border-bottom: 2px solid #a2a2a2; text-align: center; line-height: 19px; padding-left: 6px; letter-spacing: .1px; }
.radios { padding-left: 5px; margin-top: -2px; }
.radios label { height: 24.250px; display: flex; align-items: center; white-space: nowrap; }
.radios svg { width: 16px; height: 16px; margin-right: 6px; flex: none; }
.console { flex: 1; display: flex; min-height: 0; padding-top: 3px; }
.ctabs { width: 45px; font-size: 14px; color: #333; display: flex; flex-direction: column; align-items: flex-end; padding-right: 4px; }
.ctabs span { height: 22px; line-height: 22px; padding-right: 4px; letter-spacing: -.5px; }
.ctabs .tcl { background: #fff; width: 25px; height: 24px; line-height: 24px; text-align: right; padding-right: 5px; }
.term { width: 970px; height: 131px; background: #fff; border: 2px solid #d2d2d6; display: flex; justify-content: space-between; }
pre { margin: 1px 0 0; font: 13.370px/15px "Liberation Mono", monospace; white-space: pre; }
pre b { color: #4438c8; }
pre em { font-style: normal; color: #a8584a; font-size: 13px; margin-left: 3px; }
.scroll { width: 14px; border-left: 1px solid #ddd; display: flex; flex-direction: column; align-items: center; }
.up { margin-top: 4px; border: 2.500px solid transparent; border-bottom: 4px solid #555; border-top: 0; }
.thumb { width: 12px; height: 104px; margin-top: 4px; background: #f2f2f2; border: 1px solid #c6c6c6; }
.down { margin-top: 4px; border: 2.500px solid transparent; border-top: 4px solid #555; border-bottom: 0; }
.status { height: 19px; flex: none; display: flex; font-size: 13px; line-height: 22px; color: #777; }
.mode { width: 1066px; padding-left: 6px; line-height: 23px; }
.slot { margin-top: 1px; border-left: 2px solid #888; border-top: 2px solid #888; line-height: 18px; display: flex; align-items: center; }
.s1 { width: 114px; } .s2 { width: 114px; } .s3 { width: 132px; padding-left: 4px; } .s4 { flex: 1; }
.s3 i { width: 11px; height: 12px; background: #1560e0; border: 1px solid #124; margin-right: 4px; }
.legend { list-style: none; margin: 110px 0 0 19px; padding: 54px 0 0 19px; width: 444px; height: 611px; border: 3px solid #f00; font-size: 33px; color: #333; flex: none; }
.legend li { height: 41.700px; line-height: 42px; display: flex; white-space: nowrap; letter-spacing: 1.100px; font-weight: 300; }
.num { width: 82px; letter-spacing: 0; font-weight: 400; }
.dark { color: #000; }
.badge { position: absolute; width: 21px; height: 21px; border-radius: 50%; background: #fb2339; color: #fff; font: bold 13px/21px "Liberation Sans", sans-serif; text-align: center; }
.two { font-size: 11px; letter-spacing: -.3px; }
.brand { position: absolute; left: 1727px; top: 972px; width: 26px; height: 8px; }
</style>
